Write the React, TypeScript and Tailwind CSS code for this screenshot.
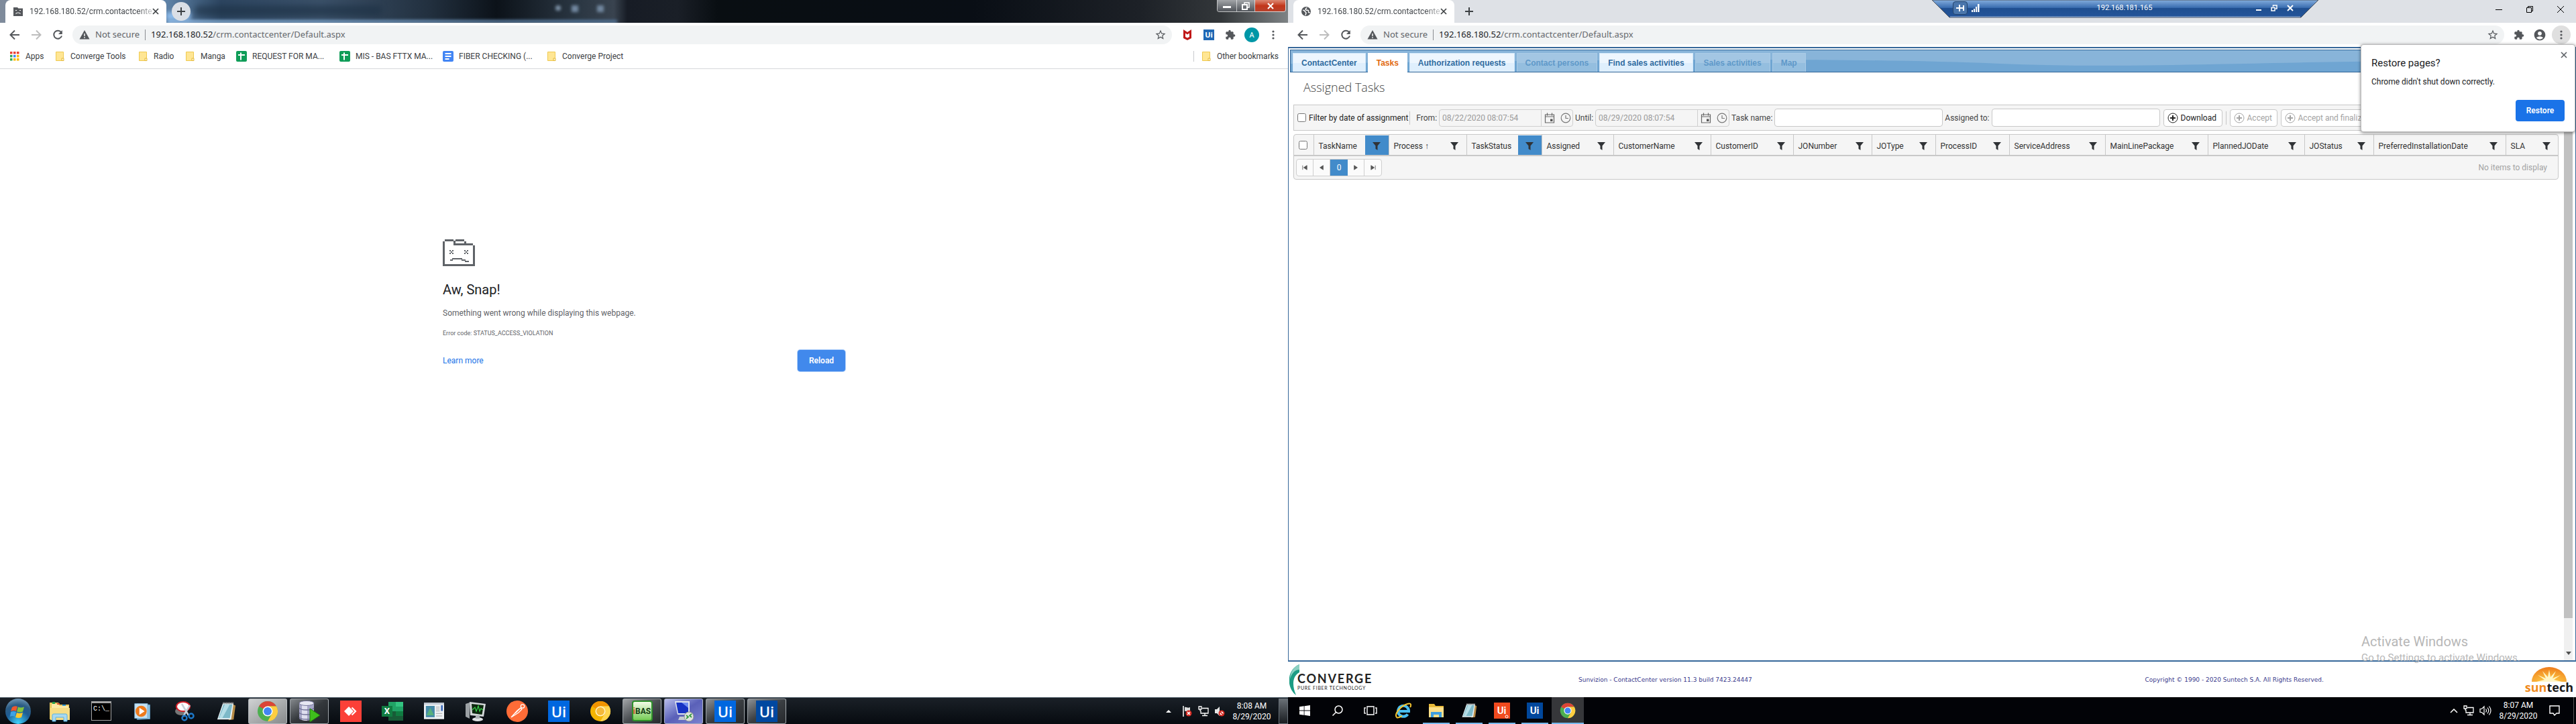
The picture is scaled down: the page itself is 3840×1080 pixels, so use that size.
import React from "react";
import { MdAccountCircle, MdExtension, MdStarBorder } from "react-icons/md";

type Kids = { children?: React.ReactNode };

/* ---------- small browser glyphs ---------- */

const ArrowGlyph = ({ forward = false }: { forward?: boolean }) => (
  <svg viewBox="0 0 16 16" className={forward ? "size-4 rotate-180 text-[#bdbdbd]" : "size-4 text-[#54575b]"} fill="none" stroke="currentColor" strokeWidth="2">
    <path d="M15 8H2M8 1.500L1.500 8 8 14.500" />
  </svg>
);

const ReloadGlyph = () => (
  <svg viewBox="0 0 16 16" className="size-4 text-[#54575b]" fill="none" stroke="currentColor" strokeWidth="2">
    <path d="M13.200 4.300A6 6 0 1 0 14 9.500" />
    <path d="M14.800 1v6H9z" fill="currentColor" stroke="none" />
  </svg>
);

const WarnGlyph = () => (
  <svg viewBox="0 0 16 16" className="size-4 shrink-0">
    <path d="M8 1l7.500 13.500H.5z" fill="#54575b" />
    <path d="M8 6v4M8 11.300v1.700" stroke="#f1f3f4" strokeWidth="1.500" />
  </svg>
);

const DotsGlyph = () => (
  <svg viewBox="0 0 4 16" className="h-4 w-1" fill="#54575b">
    <circle cx="2" cy="3" r="1.600" />
    <circle cx="2" cy="8" r="1.600" />
    <circle cx="2" cy="13" r="1.600" />
  </svg>
);

const CrossGlyph = ({ className }: { className: string }) => (
  <svg viewBox="0 0 10 10" className={className} fill="none" stroke="currentColor" strokeWidth="1.700">
    <path d="M1 1l8 8M9 1L1 9" />
  </svg>
);

const PlusGlyph = () => (
  <svg viewBox="0 0 14 14" className="size-3.5 text-[#3c4043]" stroke="currentColor" strokeWidth="2">
    <path d="M7 1v12M1 7h12" />
  </svg>
);

const FolderGlyph = () => (
  <svg viewBox="0 0 16 16" className="size-4 shrink-0">
    <path d="M2.500 1.500h11v13h-11z" fill="#ffe694" stroke="#efc94f" />
    <path d="M11 14.500v-3.500h3v3.500z" fill="#fff3c4" stroke="#e4b93c" />
  </svg>
);

const AppsGlyph = () => {
  const colors = ["#ea4335", "#ea4335", "#ea4335", "#34a853", "#4285f4", "#fbbc05", "#34a853", "#fbbc05", "#fbbc05"];
  return (
    <svg viewBox="0 0 16 16" className="size-4 shrink-0">
      {colors.map((c, i) => (
        <rect key={i} x={1 + (i % 3) * 5} y={1 + Math.floor(i / 3) * 5} width="3.500" height="3.500" fill={c} />
      ))}
    </svg>
  );
};

const SheetGlyph = () => (
  <svg viewBox="0 0 16 16" className="size-4 shrink-0">
    <rect width="16" height="16" rx="2" fill="#0f9d58" />
    <path d="M3 6h10M7 2.500v11" stroke="#fff" strokeWidth="2" />
  </svg>
);

const DocGlyph = () => (
  <svg viewBox="0 0 16 16" className="size-4 shrink-0">
    <rect width="16" height="16" rx="2" fill="#4285f4" />
    <path d="M3.500 4h9M3.500 8h9M3.500 12h6" stroke="#fff" strokeWidth="2" />
  </svg>
);

const SadTabGlyph = () => (
  <svg viewBox="0 0 14 14" className="size-3.5 shrink-0">
    <path d="M0 1h6l1.500 1.500H14V14H0z" fill="#54575b" />
    <path d="M3 5.500h2M9 5.500h2M3.500 10.500c1-2 6-2 7 0" stroke="#fff" fill="none" strokeWidth="1.200" />
  </svg>
);

const GlobeGlyph = () => (
  <svg viewBox="0 0 16 16" className="size-3.5 shrink-0">
    <circle cx="8" cy="8" r="8" fill="#54575b" />
    <path d="M2.500 6c2 0 3 .5 3.500 2s2 1 2 2.500-1 2-1 4M9 1.500c0 1.500-2 1.500-2 3s2 1.500 3.500 1.500 2 1 1.500 2.500 1 1.500 2.500 1.500" stroke="#fff" strokeWidth="1.700" fill="none" />
  </svg>
);

const DeadFolderArt = () => (
  <svg viewBox="0 0 48 40" className="h-10 w-12" fill="none" stroke="#5f6368" strokeWidth="3" shapeRendering="crispEdges">
    <path d="M1.500 3v35.500h45V9M3 1.500h13M19 1.500h13M17.500 1.500v6.500M16 7.500h29M33.500 3v5" />
    <path d="M10 17h2M14 17h2M12 19h2M10 21h2M14 21h2M32 17h2M36 17h2M34 19h2M32 21h2M36 21h2" strokeWidth="2" />
    <path d="M11 31h4M14 29h15M28 31h6M33 33h6" strokeWidth="2" />
  </svg>
);

/* ---------- browser chrome ---------- */

const Toolbar = ({ remote = false, children }: Kids & { remote?: boolean }) => (
  <div className="flex h-9 shrink-0 items-center bg-white pl-3.5 font-['Noto_Sans',sans-serif] text-[13px]">
    <button aria-label="Back" className="mr-4"><ArrowGlyph /></button>
    <button aria-label="Forward" className="mr-4"><ArrowGlyph forward /></button>
    <button aria-label="Reload" className="mr-3.5"><ReloadGlyph /></button>
    <div className="flex h-7 flex-1 items-center rounded-full bg-[#f1f3f4] pl-2.5 pr-2">
      <WarnGlyph />
      <span className="ml-2 text-[#5f6368]">Not secure</span>
      <span className="mx-2 h-4 w-px bg-[#8a8d91]" />
      <span className="flex-1 text-[#66696d]">
        <span className="text-[#202124]">192.168.180.52</span>/crm.contactcenter/Default.aspx
      </span>
      <button aria-label="Bookmark this page"><MdStarBorder className="size-[18px] text-[#54575b]" /></button>
    </div>
    {children}
    <span className={remote ? "w-2" : "w-3.5"} />
  </div>
);

const bookmarks = [
  { label: "Apps", icon: <AppsGlyph />, width: "w-[67px]" },
  { label: "Converge Tools", icon: <FolderGlyph />, width: "w-[124px]" },
  { label: "Radio", icon: <FolderGlyph />, width: "w-[70px]" },
  { label: "Manga", icon: <FolderGlyph />, width: "w-[77px]" },
  { label: "REQUEST FOR MA...", icon: <SheetGlyph />, width: "w-[154px]" },
  { label: "MIS - BAS FTTX MA...", icon: <SheetGlyph />, width: "w-[154px]" },
  { label: "FIBER CHECKING (...", icon: <DocGlyph />, width: "w-[154px]" },
  { label: "Converge Project", icon: <FolderGlyph />, width: "w-[130px]" },
];

const TabLabel = () => (
  <span className="ml-2.5 whitespace-nowrap text-[#45494d] [mask-image:linear-gradient(90deg,#000_88%,rgba(0,0,0,0.25))]">192.168.180.52/crm.contactcente</span>
);

const AeroStrip = () => (
  <div className="relative flex h-[34px] shrink-0 overflow-hidden bg-[#0a0f15]">
    <div className="absolute inset-0 bg-[linear-gradient(90deg,#7f8b9b_0px,#5d81a6_250px,#2c4560_330px,#3a5068_480px,#22303f_640px,#0c1219_740px,#2a3642_860px,#39434f_915px,#171c25_935px,#1a1f27_1010px,#090e12_1070px,#090e15_1450px,#1d2127_1700px,#33373a_1820px,#7e8385_1920px)]" />
    <div className="absolute bottom-0 left-[250px] h-1 w-[670px] bg-linear-to-r from-[#9ac4ee] to-[#56799e] blur-[2px]" />
    <div className="absolute bottom-1 left-[248px] h-3 w-[36px] bg-[#8fbdec] blur-[3px]" />
    <div className="absolute left-[290px] top-2 h-4 w-[280px] rounded-full bg-[#1c3045]/60 blur-[4px]" />
    <div className="absolute left-[828px] top-2 flex gap-4 blur-[2px]">
      <span className="size-2 rounded-full bg-[#7e93a8]" />
      <span className="size-2.5 bg-[#7288a0]" />
      <span className="ml-3 size-2.5 bg-[#7288a0]" />
    </div>
    <div className="relative ml-2 flex w-[240px] items-center rounded-t-lg bg-white pl-3 pr-3">
      <SadTabGlyph />
      <TabLabel />
      <button aria-label="Close tab" className="ml-auto text-[#3c4043]"><CrossGlyph className="size-2.5" /></button>
    </div>
    <button aria-label="New tab" className="relative ml-2 mt-[3px] flex size-7 items-center justify-center rounded-full bg-[#dadfe6]"><PlusGlyph /></button>
    <div className="relative ml-auto mr-[3px] flex h-[18px] w-[103px] overflow-hidden rounded-b border border-t-0 border-white/70 text-white">
      <button aria-label="Minimize" className="flex w-7 items-center justify-center bg-linear-to-b from-[#a2a5a8] to-[#50545a] pt-1"><span className="h-[3px] w-3 bg-white" /></button>
      <button aria-label="Restore" className="flex w-7 items-center justify-center border-x border-white/60 bg-linear-to-b from-[#a2a5a8] to-[#50545a]">
        <svg viewBox="0 0 12 12" className="size-3" fill="none" stroke="#fff" strokeWidth="1.500"><path d="M4 3V1h7v7H9" /><path d="M1 4h7v7H1z" strokeWidth="2" /></svg>
      </button>
      <button aria-label="Close" className="flex flex-1 items-center justify-center bg-linear-to-b from-[#dc8872] via-[#c2361a] to-[#b8422c]"><CrossGlyph className="size-2.5 stroke-2" /></button>
    </div>
  </div>
);

const CrashPage = () => (
  <main className="flex flex-1 flex-col items-center bg-white pt-[254px]">
    <div className="w-[600px]">
      <DeadFolderArt />
      <h1 className="mt-5 text-[20px] leading-[30px] text-[#202124]">Aw, Snap!</h1>
      <p className="mt-2.5 text-xs leading-5 text-[#5f6368]">Something went wrong while displaying this webpage.</p>
      <p className="mt-3 text-[9px] leading-4 text-[#5f6368]">Error code: STATUS_ACCESS_VIOLATION</p>
      <div className="mt-[17px] flex items-center justify-between">
        <a href="#learn" className="text-xs text-[#1a73e8]">Learn more</a>
        <button className="h-8 w-[71px] rounded bg-[#4189ec] text-xs font-semibold text-white ring-1 ring-[#b5d3fb]">Reload</button>
      </div>
    </div>
  </main>
);

const LocalBrowser = () => (
  <section className="flex min-h-0 flex-1 flex-col">
    <AeroStrip />
    <Toolbar>
      <div className="flex items-center gap-4 pl-[15px]">
        <svg viewBox="0 0 16 16" className="size-4"><path d="M2 0l6 4 6-4v13l-6 3-6-3z" fill="#c01818" /><path d="M5 5.500l3 2 3-2V11l-3 1.500L5 11z" fill="#fff" /></svg>
        <span className="flex size-4 items-center justify-center bg-[#1f68b5] text-[11px] font-bold text-white">Ui</span>
        <button aria-label="Extensions"><MdExtension className="size-4 text-[#54575b]" /></button>
        <button className="-mx-[3px] flex size-[22px] items-center justify-center rounded-full bg-[#0097a7] text-[11px] text-white">A</button>
        <button aria-label="Menu" className="flex w-4 justify-center"><DotsGlyph /></button>
      </div>
    </Toolbar>
    <nav aria-label="Bookmarks" className="flex h-[33px] shrink-0 items-center border-b border-[#d5d7da] bg-white pb-1 pl-3.5 text-[#3c4043]">
      {bookmarks.map((b) => (
        <a key={b.label} href="#bookmark" className={`flex shrink-0 items-center gap-2 whitespace-nowrap ${b.width}`}>
          {b.icon}
          {b.label}
        </a>
      ))}
      <a href="#other" className="ml-auto mr-3.5 flex items-center gap-2 whitespace-nowrap border-l border-[#c8cacd] pl-2.5">
        <FolderGlyph />
        Other bookmarks
      </a>
    </nav>
    <CrashPage />
  </section>
);

/* ---------- remote application ---------- */

const appTabs = [
  { label: "ContactCenter", state: "on" },
  { label: "Tasks", state: "current" },
  { label: "Authorization requests", state: "on" },
  { label: "Contact persons", state: "off" },
  { label: "Find sales activities", state: "on" },
  { label: "Sales activities", state: "off" },
  { label: "Map", state: "off" },
];

const tabLook: Record<string, string> = {
  on: "h-7 bg-linear-to-b from-[#eef6fe] from-50% to-[#dfeffd] to-50% text-[#2f6ba0] border-[#d3e8fa]",
  current: "h-[29px] -mb-px pb-px bg-white text-[#e26a10] border-white",
  off: "h-7 bg-linear-to-b from-[#a3c6e3] from-50% to-[#94bedf] to-50% text-[#5f99c9] border-[#aacbe6]",
};

const FunnelGlyph = () => (
  <svg viewBox="0 0 14 14" className="size-3.5" fill="#303336"><path d="M1 1h12L8.500 6.500V13l-3-2V6.500z" /></svg>
);

const CalendarGlyph = () => (
  <svg viewBox="0 0 16 16" className="size-4" fill="none" stroke="#666" strokeWidth="1.200">
    <path d="M1.500 3h13v12h-13zM1.500 6h13M4.500 .5v4M11.500 .5v4" /><path d="M9 9.500h3.500V13H9z" fill="#555" stroke="none" />
  </svg>
);

const ClockGlyph = () => (
  <svg viewBox="0 0 16 16" className="size-4" fill="none" stroke="#777" strokeWidth="1.200">
    <circle cx="8" cy="8" r="6.800" /><path d="M8 4v4.500h4" />
  </svg>
);

const CirclePlus = () => (
  <svg viewBox="0 0 16 16" className="size-4" fill="none" stroke="currentColor"><circle cx="8" cy="8" r="7" /><path d="M8 4v8M4 8h8" strokeWidth="2" /></svg>
);

const DateField = ({ label, value, id }: { label: string; value: string; id: string }) => (
  <>
    <label htmlFor={id}>{label}</label>
    <div className="flex h-[26px] w-[200px] shrink-0 items-center rounded border border-[#cfcfcf] bg-[#f5f5f5]">
      <input id={id} disabled defaultValue={value} className="h-full w-[152px] border-r border-[#cfcfcf] pl-1 text-[#9a9a9a]" />
      <button type="button" aria-label={`${label} calendar`} className="ml-1"><CalendarGlyph /></button>
      <button type="button" aria-label={`${label} time`} className="ml-2"><ClockGlyph /></button>
    </div>
  </>
);

const columns: { name: string; width: string; active?: boolean; arrow?: boolean }[] = [
  { name: "TaskName", width: "w-[112px]", active: true },
  { name: "Process", width: "w-[116px]", arrow: true },
  { name: "TaskStatus", width: "w-[112px]", active: true },
  { name: "Assigned", width: "w-[107px]" },
  { name: "CustomerName", width: "w-[145px]" },
  { name: "CustomerID", width: "w-[123px]" },
  { name: "JONumber", width: "w-[117px]" },
  { name: "JOType", width: "w-[95px]" },
  { name: "ProcessID", width: "w-[110px]" },
  { name: "ServiceAddress", width: "w-[143px]" },
  { name: "MainLinePackage", width: "w-[153px]" },
  { name: "PlannedJODate", width: "w-[144px]" },
  { name: "JOStatus", width: "w-[103px]" },
  { name: "PreferredInstallationDate", width: "w-[197px]" },
  { name: "SLA", width: "w-[78px]" },
];

const TaskGrid = () => (
  <div className="mt-[5px] rounded border border-[#c8c8c8] bg-[#f5f5f5] text-[#333]">
    <table className="w-full table-fixed border-collapse">
      <thead>
        <tr className="h-[31px] border-b-2 border-[#c8c8c8]">
          <th className="w-[29px] p-0 pl-[7px] pt-1 text-left"><input type="checkbox" aria-label="Select all" className="size-[13px]" /></th>
          {columns.map((c) => (
            <th key={c.name} className={`border-l border-[#c8c8c8] p-0 font-normal ${c.width}`}>
              <div className="flex h-[29px] items-center justify-between pl-[7px]">
                <span className="whitespace-nowrap pt-1">{c.name}{c.arrow ? " ↑" : ""}</span>
                <button aria-label={`Filter ${c.name}`} className={c.active ? "flex h-full w-[35px] items-center justify-center bg-[#428bca] pt-1" : "flex h-full w-[35px] items-center justify-center pt-1"}>
                  <FunnelGlyph />
                </button>
              </div>
            </th>
          ))}
        </tr>
      </thead>
    </table>
    <div className="flex h-[34px] items-center justify-between pl-[3px] pr-4">
      <div className="flex h-[26px] overflow-hidden rounded border border-[#cfcfcf] bg-[#fbfbfb]">
        {["M1 1v8M9 1v8L3 5z", "M8 1v8L2 5z", "", "M2 1v8l6-4z", "M1 1v8l6-4zM9 1v8"].map((d, i) =>
          d ? (
            <button key={i} aria-label={["First page", "Previous page", "", "Next page", "Last page"][i]} className="flex w-[25px] items-center justify-center border-r border-[#cfcfcf] last:border-r-0">
              <svg viewBox="0 0 10 10" className="size-2" fill="#555" stroke="#555"><path d={d} /></svg>
            </button>
          ) : (
            <button key={i} className="w-[26px] bg-[#428bca] text-white">0</button>
          )
        )}
      </div>
      <span className="text-[#a3a3a3]">No items to display</span>
    </div>
  </div>
);

const TasksPage = () => (
  <div className="relative flex min-h-0 flex-1 flex-col border-2 border-l border-r border-[#36679a] border-t-[#36679a] bg-white pl-0.5 pr-0 pt-0.5">
    <nav aria-label="Sections" className="relative flex h-[34px] shrink-0 items-end border border-[#2f6496] bg-[#88b4d9] pl-[3px] font-['Liberation_Sans',sans-serif] font-bold">
      <svg viewBox="0 0 1900 32" preserveAspectRatio="none" className="absolute inset-0 h-full w-full">
        <path d="M0 20C500 14 800 10 1050 20S1500 10 1900 18V32H0z" fill="#6fa5d2" />
      </svg>
      {appTabs.map((t) => (
        <a key={t.label} href="#tab" className={`relative mr-[3px] flex items-center border-x border-t px-3 ${tabLook[t.state]}`}>{t.label}</a>
      ))}
    </nav>
    <div className="flex min-h-0 flex-1">
      <main className="min-w-0 flex-1 pl-[5px] pr-2">
        <h1 className="ml-[15px] pb-2.5 pt-1.5 font-['Open_Sans',sans-serif] text-[18px] font-light leading-8 text-[#444]">Assigned Tasks</h1>
        <form className="flex h-[39px] items-center gap-[3px] overflow-hidden whitespace-nowrap border border-[#c8c8c8] bg-[#f5f5f5] pl-1 text-[#444]">
          <label className="mr-1.5 flex h-5 shrink-0 items-center gap-1 border-r border-[#c8c8c8] pr-0.5 text-[#222]"><input type="checkbox" className="ml-px size-[13px] shrink-0" />Filter by date of assignment</label>
          <DateField id="from" label="From:" value="08/22/2020 08:07:54" />
          <DateField id="until" label="Until:" value="08/29/2020 08:07:54" />
          <label htmlFor="task">Task name:</label>
          <input id="task" className="h-[27px] w-[251px] shrink-0 rounded border border-[#c8c8c8] bg-white" />
          <label htmlFor="assigned">Assigned to:</label>
          <input id="assigned" className="h-[27px] w-[251px] shrink-0 rounded border border-[#c8c8c8] bg-white" />
          <button type="button" className="ml-0.5 flex h-[26px] w-[88px] shrink-0 items-center gap-1 rounded border border-[#c8c8c8] bg-white pl-[5px] text-[#222]"><CirclePlus />Download</button>
          <span className="mx-0.5 h-5 w-px shrink-0 bg-[#c8c8c8]" />
          <button type="button" disabled className="flex h-[26px] w-[71px] shrink-0 items-center gap-1 rounded border border-[#c8c8c8] bg-white pl-[5px] text-[#a3a3a3]"><CirclePlus />Accept</button>
          <button type="button" disabled className="ml-0.5 flex h-[26px] w-[140px] shrink-0 items-center gap-1 rounded border border-[#c8c8c8] bg-white pl-[5px] text-[#a3a3a3]"><CirclePlus />Accept and finalize</button>
        </form>
        <TaskGrid />
      </main>
      <div className="mr-[4px] flex w-[13px] flex-col items-center bg-[#f0f0f0]">
        <div className="h-[814px] w-full bg-[#c1c1c1]" />
        <svg viewBox="0 0 8 5" className="mb-2 mt-auto h-[5px] w-2"><path d="M0 0h8L4 5z" fill="#505050" /></svg>
      </div>
    </div>
    <div className="absolute -bottom-1.5 right-[84px] w-[235px] whitespace-nowrap text-[#b7b7b7]">
      <div className="text-[20px] leading-7">Activate Windows</div>
      <div className="text-[15px] leading-5">Go to Settings to activate Windows.</div>
    </div>
  </div>
);

const RdpBar = () => (
  <div className="absolute left-1/2 top-0 h-[27px] w-[576px] text-white">
    <svg viewBox="0 0 576 27" className="absolute inset-0 h-full w-full">
      <defs>
        <linearGradient id="rdp" x1="0" y1="0" x2="0" y2="1">
          <stop offset="0" stopColor="#83addd" /><stop offset=".44" stopColor="#3a6db0" /><stop offset=".46" stopColor="#1f4f90" /><stop offset="1" stopColor="#24549a" />
        </linearGradient>
      </defs>
      <path d="M0 0h576l-26 26H26z" fill="url(#rdp)" stroke="#4c535c" />
      <path d="M27 25h522" stroke="#9fb9da" />
    </svg>
    <div className="relative grid h-6 grid-cols-[1fr_auto_1fr] items-center pl-[31px] pr-[37px]">
      <div className="flex items-center">
        <button aria-label="Pin" className="flex h-5 w-[22px] items-center justify-center rounded border border-[#24446c] bg-[#4a76ac]">
          <svg viewBox="0 0 12 10" className="h-2.5 w-3" fill="none" stroke="#fff" strokeWidth="2"><path d="M0 5h5M5 0v10M5 5h6M11 1v8" /></svg>
        </button>
        <svg viewBox="0 0 12 12" className="ml-1.5 size-3" fill="#fff"><path d="M0 9h2v3H0zM3 7h2v5H3zM6 4h2v8H6zM9 0h2.500v12H9z" /></svg>
      </div>
      <span className="pl-1 text-[11px]">192.168.181.165</span>
      <div className="flex items-center justify-end gap-3.5">
        <button aria-label="Minimize session" className="mt-1.5 h-0.5 w-2 bg-white" />
        <button aria-label="Restore session"><svg viewBox="0 0 10 10" className="size-2.5" fill="none" stroke="#fff" strokeWidth="1.500"><path d="M3.500 3V1H9v5H7M1 4.500h5V9H1z" /></svg></button>
        <button aria-label="Close session"><CrossGlyph className="size-2.5 stroke-2" /></button>
      </div>
    </div>
  </div>
);

const RestoreDialog = () => (
  <div role="dialog" aria-labelledby="restore-title" className="absolute right-px top-[66px] flex h-[131px] w-[320px] flex-col rounded-sm border border-[#bbb] bg-white p-[15px] text-[#202124] shadow-[0_1px_5px_rgba(0,0,0,0.5)]">
    <button aria-label="Close" className="absolute right-[11px] top-[10px] text-[#5f6368]"><CrossGlyph className="size-2.5" /></button>
    <h2 id="restore-title" className="text-[15px] leading-6">Restore pages?</h2>
    <p className="mt-1.5 leading-5">Chrome didn't shut down correctly.</p>
    <button className="ml-auto mt-auto h-8 w-[73px] shrink-0 rounded bg-[#1a73e8] font-semibold text-white">Restore</button>
  </div>
);

const RemoteBrowser = () => (
  <section className="relative flex min-h-0 flex-1 flex-col">
    <div className="flex h-[34px] shrink-0 bg-[#dee1e6] pl-2">
      <div className="flex w-[240px] items-center rounded-t-lg bg-white px-3">
        <GlobeGlyph />
        <TabLabel />
        <button aria-label="Close tab" className="ml-auto text-[#3c4043]"><CrossGlyph className="size-2.5" /></button>
      </div>
      <button aria-label="New tab" className="ml-[15px]"><PlusGlyph /></button>
      <div className="ml-auto mr-[18px] flex h-7 items-center gap-9 text-black">
        <button aria-label="Minimize" className="h-px w-2.5 bg-black" />
        <button aria-label="Restore"><svg viewBox="0 0 10 10" className="size-2.5" fill="none" stroke="currentColor"><path d="M2.500 2.500v-2h7v7h-2M.5 2.500h7v7h-7z" /></svg></button>
        <button aria-label="Close"><svg viewBox="0 0 10 10" className="size-2.5" stroke="currentColor"><path d="M0 0l10 10M10 0L0 10" /></svg></button>
      </div>
    </div>
    <Toolbar remote>
      <div className="flex items-center gap-3.5 pl-3.5">
        <button aria-label="Extensions"><MdExtension className="size-4 text-[#54575b]" /></button>
        <button aria-label="Profile" className="-mx-px"><MdAccountCircle className="size-5 text-[#54575b]" /></button>
        <button aria-label="Menu" className="-ml-[5px] flex size-7 items-center justify-center rounded-full bg-[#dfdfdf]"><DotsGlyph /></button>
      </div>
    </Toolbar>
    <TasksPage />
    <footer className="flex h-[53px] shrink-0 items-center bg-white font-['DejaVu_Sans',sans-serif] text-[9px] text-[#3a3a8c]">
      <div className="flex w-[433px] items-center pl-[2px]">
        <svg viewBox="0 0 16 46" className="h-[46px] w-4"><path d="M15 0C-4 8-5 34 10 46 4 32 4 18 15 12z" fill="#1c9c84" /><path d="M15 0C5 4 1 14 1 22 4 12 9 8 15 8z" fill="#8bd0c2" /></svg>
        <div className="-ml-1 pt-2 font-['Lato',sans-serif] text-[#222]">
          <div className="text-[18px] font-bold leading-4 tracking-widest">CONVERGE</div>
          <div className="text-[7px] leading-3 tracking-widest">PURE FIBER TECHNOLOGY</div>
        </div>
      </div>
      <span>Sunvizion - ContactCenter version 11.3 build 7423.24447</span>
      <span className="ml-auto">Copyright © 1990 - 2020 Suntech S.A. All Rights Reserved.</span>
      <div className="ml-[300px] mr-1 flex flex-col items-center">
        <svg viewBox="0 0 52 22" className="h-[22px] w-[52px]">
          <defs><radialGradient id="sun" cx=".5" cy="1" r="1"><stop offset="0" stopColor="#ffd24a" /><stop offset="1" stopColor="#ee7a1a" /></radialGradient></defs>
          <path d="M0 22a26 22 0 0 1 52 0z" fill="url(#sun)" />
          <path d="M26 4l2 11 8-9-5 11 12-5-10 7 12 3H7l12-3L9 12l12 5-5-11 8 9z" fill="#fff6c8" />
        </svg>
        <div className="font-['Open_Sans',sans-serif] text-[18px] font-bold leading-4 text-[#1a1a1a]"><span className="text-[#f08a1d]">sun</span>tech</div>
      </div>
    </footer>
    <RdpBar />
    <RestoreDialog />
  </section>
);

/* ---------- taskbar icons ---------- */

const ChromeArt = ({ canary = false, className }: { canary?: boolean; className: string }) => (
  <svg viewBox="0 0 32 32" className={className}>
    <circle cx="16" cy="16" r="15" fill={canary ? "#f4b400" : "#4caf50"} />
    <path d="M16 16L3 8.500A15 15 0 0 1 29 8.500H16z" fill={canary ? "#f09300" : "#db4437"} />
    <path d="M16 8.500h13A15 15 0 0 1 16 31l6.500-11.500z" fill={canary ? "#ffd54f" : "#ffcd40"} />
    <circle cx="16" cy="16" r="7.500" fill={canary ? "#fff3c4" : "#fff"} />
    <circle cx="16" cy="16" r="6" fill={canary ? "#f4b93a" : "#4285f4"} />
  </svg>
);

const FolderArt = ({ className }: { className: string }) => (
  <svg viewBox="0 0 32 32" className={className}>
    <path d="M1 3h13l2 3h14v22H1z" fill="#e8c65c" />
    <path d="M4 5h9l3 3h13v18H4z" fill="#fbe9a6" />
    <path d="M2 11h29v18H2z" fill="#f6dd86" />
    <path d="M5 31v-9q0-2 2-2h18q2 0 2 2v9h-5v-6H10v6z" fill="#a9d8f0" stroke="#58b2e4" />
    <path d="M5 2h4v3H5z" fill="#24a04a" /><path d="M12 4h4v2h-4z" fill="#d84a2c" /><path d="M20 6h5v2h-5z" fill="#2f9ad8" />
  </svg>
);

const NotepadArt = ({ className }: { className: string }) => (
  <svg viewBox="0 0 32 32" className={className}>
    <path d="M27 5l4 2-3 22-8 1z" fill="#b58a45" /><path d="M11 3h17l-4 26H2z" fill="#e8f2f5" /><path d="M12 5h14l-4 22H4z" fill="#7db9c8" /><path d="M14 5h8L10 27H5z" fill="#b5dde6" />
    <path d="M11 3h17" stroke="#888" strokeWidth="3" strokeDasharray="1.500 1" />
  </svg>
);

const UiTile = ({ tone }: { tone: string }) => (
  <span className={`flex size-8 items-center justify-center font-['Open_Sans',sans-serif] text-[22px] font-semibold leading-none text-white ${tone}`}>Ui</span>
);

const localApps: { name: string; open?: string; art: React.ReactNode }[] = [
  { name: "File Explorer", art: <FolderArt className="size-8" /> },
  { name: "Command Prompt", art: <span className="flex h-[29px] w-[30px] items-start border border-t-[3px] border-[#a5a5a5] bg-black pl-0.5 pt-1 font-['Liberation_Mono',monospace] text-[10px] leading-none text-white">C:\_</span> },
  { name: "Media Player", art: <svg viewBox="0 0 32 32" className="size-7"><path d="M6 3l22 2v24L6 30z" fill="#8fc3e2" stroke="#5f9cc4" /><path d="M2 3h22v25H2z" fill="#c4e2f4" stroke="#79aacb" /><circle cx="13" cy="16" r="9.500" fill="#ee7a1c" /><path d="M10 10l9 6-9 6z" fill="#fff" /></svg> },
  { name: "Snipping Tool", art: <svg viewBox="0 0 32 32" className="size-8"><ellipse cx="11" cy="16" rx="9" ry="6" fill="#777" /><ellipse cx="14" cy="9" rx="10" ry="7" fill="#fff" stroke="#d5202a" strokeWidth="2" /><path d="M12 5l10 17M24 7L14 24" stroke="#c7ced6" strokeWidth="2.500" /><circle cx="16" cy="26" r="3.500" fill="none" stroke="#1d78c8" strokeWidth="2.500" /><circle cx="26" cy="23" r="3.500" fill="none" stroke="#1d78c8" strokeWidth="2.500" /></svg> },
  { name: "Notepad", art: <NotepadArt className="size-[30px]" /> },
  { name: "Chrome", open: "bg-linear-to-br from-[#d0d2d3] to-[#878a8c]", art: <ChromeArt className="size-8" /> },
  { name: "SQL Developer", open: "bg-linear-to-br from-[#85898d] via-[#34383c] to-[#202428]", art: <svg viewBox="0 0 32 32" className="size-8"><path d="M1 4v22c0 5 22 5 22 0V4z" fill="#a5a5c6" /><path d="M5 5v24c3 1 6 1 8 1V5z" fill="#dedeee" /><ellipse cx="12" cy="4" rx="11" ry="3.500" fill="#e6e6f2" stroke="#77779c" /><path d="M1 11c2 4 20 4 22 0M1 18c2 4 20 4 22 0M1 25c2 4 20 4 22 0" fill="none" stroke="#6d6d94" strokeWidth="1.500" /><path d="M17 12l15 10-15 10z" fill="#3fbf1c" stroke="#207a0c" /></svg> },
  { name: "AnyDesk", art: <span className="flex size-8 items-center justify-center bg-[#fb4038]"><svg viewBox="0 0 20 14" className="h-3.5 w-5"><path d="M7 0l7 7-7 7-7-7z" fill="#fff" /><path d="M11.500 1.500L17 7l-5.500 5.500" fill="none" stroke="#fff" strokeWidth="2.200" /></svg></span> },
  { name: "Excel", art: <span className="relative flex size-8 items-center"><svg viewBox="0 0 32 32" className="absolute inset-0"><path d="M10 2h11v14H10z" fill="#21a366" /><path d="M21 2h11v7H21z" fill="#33c481" /><path d="M21 9h11v7H21z" fill="#21a366" /><path d="M10 16h11v14H10z" fill="#185c37" /><path d="M21 16h11v7H21z" fill="#107c41" /><path d="M21 23h11v7H21z" fill="#185c37" /></svg><span className="relative flex size-4 items-center justify-center bg-[#107c41] text-[13px] font-bold text-white">X</span></span> },
  { name: "System Viewer", art: <svg viewBox="0 0 32 26" className="h-[25px] w-[30px]"><path d="M0 0h32v26H0z" fill="#eef1f4" /><path d="M0 0h32v3H0z" fill="#c4ccd6" /><path d="M3 5h14v18H3z" fill="#468aa8" /><path d="M4 20l6-12 6 12z" fill="#59b07c" /><path d="M19 7h6M19 10h6M19 13h6M19 17h10M19 21h10" stroke="#a0a0a0" /><path d="M27 4h3v9h-3z" fill="#3c6ab8" /></svg> },
  { name: "Performance Monitor", art: <svg viewBox="0 0 32 32" className="size-8"><path d="M1 5l6-2v24l-6-3z" fill="#9ba0a4" /><path d="M7 2l24 3-3 19-20-2z" fill="#d4d8da" /><path d="M10 5l18 2-2.500 14L11 19z" fill="#0d280f" /><path d="M11 14l4-4 2 6 3-8 2 8 2-4 3 2" stroke="#39d24a" fill="none" strokeWidth="1.200" /><ellipse cx="19" cy="28" rx="8" ry="3" fill="#dfe2e4" /><path d="M16 22h6v5h-6z" fill="#aeb3b7" /></svg> },
  { name: "Postman", art: <svg viewBox="0 0 32 32" className="size-8"><circle cx="16" cy="16" r="16" fill="#ff6c37" /><path d="M7 25l9-10 5-4 2 2-5 5z" fill="none" stroke="#fff" strokeWidth="1.300" /><circle cx="24" cy="8.500" r="2.700" fill="none" stroke="#fff" strokeWidth="1.300" /><path d="M13 19l7-7" stroke="#fff" strokeWidth="1.500" /></svg> },
  { name: "UiPath Studio", art: <UiTile tone="bg-[#0067df]" /> },
  { name: "Chrome Canary", art: <ChromeArt canary className="size-8" /> },
  { name: "iBAS", open: "bg-linear-to-br from-[#a3a6a9] via-[#4a4e52] to-[#26292d]", art: <span className="flex h-[31px] w-[31px] items-center justify-center rounded border-2 border-[#2d8f2b] bg-linear-to-b from-[#f2fbe6] to-[#74cc52] text-xs font-bold text-[#143c12]"><span className="text-[#d4502a]">i</span>BAS</span> },
  { name: "Remote Desktop", open: "bg-linear-to-br from-[#b9bdea] via-[#5a60b8] to-[#7c82cf]", art: <svg viewBox="0 0 32 32" className="size-8"><path d="M3 1h22v20H7z" fill="#dfe4ee" /><path d="M5 3h18v16H8z" fill="#1732c4" /><path d="M13 3h10v8z" fill="#6f8cf0" /><path d="M10 24h12l3 5H8z" fill="#c5cad2" /><circle cx="24" cy="24" r="7" fill="#dfe3df" stroke="#8d948d" /><path d="M20 22l3 2.500-3 2.500M28 20l-3 2.500 3 2.500" fill="none" stroke="#2f9a38" strokeWidth="1.700" /></svg> },
  { name: "UiPath Assistant", open: "bg-linear-to-br from-[#8d9195] via-[#3a3e42] to-[#26292d]", art: <UiTile tone="bg-[#0067df]" /> },
  { name: "UiPath Robot", open: "bg-linear-to-br from-[#8d9195] via-[#3a3e42] to-[#26292d]", art: <UiTile tone="bg-[#0048a0]" /> },
];

const Clock = ({ time }: { time: string }) => (
  <div className="w-16 text-center text-xs leading-4 text-white">
    <div>{time}</div>
    <div>8/29/2020</div>
  </div>
);

const NetGlyph = () => (
  <svg viewBox="0 0 16 16" className="size-4" fill="none" stroke="#fff" strokeWidth="1.300"><path d="M6 3.500h9v7.500H4V7M10 11v3M6 14.500h8M1 1h4v4H1zM3 5v2h1" /></svg>
);

const LocalTaskbar = () => (
  <footer className="flex h-10 shrink-0 items-center border-t border-[#56646f] bg-linear-to-b from-[#1a2027] to-[#070b10] pl-2">
    <button aria-label="Start" className="mr-3.5 flex size-[38px] items-center justify-center rounded-full bg-[radial-gradient(circle_at_50%_95%,#3fd2fb,#1d5c94_45%,#2c5c84_65%,#8fb3cc)]">
      <svg viewBox="0 0 24 24" className="size-6"><path d="M3 6q4-3 8-1l-2 7q-3-2-8 0z" fill="#f0582c" /><path d="M12 5.500q4 2 9 0l-2 7q-4 2-9 0z" fill="#84c43c" /><path d="M1 13q4-2 8 0l-2 7q-3-2-7 0z" fill="#3ea2e4" /><path d="M10 14q4 2 9 0l-2 7q-4 2-9 0z" fill="#fcc82c" /></svg>
    </button>
    <div className="flex items-center gap-1">
      {localApps.map((a) => (
        <button key={a.name} aria-label={a.name} className={`flex h-[38px] w-[58px] items-center justify-center rounded-[3px] ${a.open ? "border border-[#b4babf]/80 " + a.open : ""}`}>{a.art}</button>
      ))}
    </div>
    <div className="ml-auto flex items-center gap-2">
      <svg viewBox="0 0 8 4" className="mr-2 h-1 w-2"><path d="M0 4l4-4 4 4z" fill="#fff" /></svg>
      <svg viewBox="0 0 16 16" className="size-4"><path d="M2 0v16" stroke="#fff" strokeWidth="1.500" /><path d="M4 2c3-1 4 2 8 0v6c-4 2-5-1-8 0z" fill="#ddd" /><circle cx="10" cy="11" r="4.500" fill="#d4261e" /><path d="M8 9l4 4M12 9l-4 4" stroke="#fff" strokeWidth="1.500" /></svg>
      <NetGlyph />
      <svg viewBox="0 0 16 16" className="size-4"><path d="M1 5h3l4-4v14l-4-4H1z" fill="#e4e4e4" /><circle cx="11" cy="11" r="4.500" fill="#d4261e" /><circle cx="11" cy="11" r="2.500" fill="#fff" /><path d="M8 8l6 6" stroke="#d4261e" strokeWidth="1.700" /></svg>
      <Clock time="8:08 AM" />
      <button aria-label="Show desktop" className="h-[38px] w-[14px] border border-[#6c747c] bg-linear-to-b from-[#6a7076] to-[#1a1e22]" />
    </div>
  </footer>
);

const remoteApps: { name: string; state: string; art: React.ReactNode }[] = [
  { name: "Start", state: "idle", art: <svg viewBox="0 0 16 16" className="size-4" fill="#fff"><path d="M0 2.300L6.700 1.300V7.600H0zM7.500 1.200L16 0V7.600H7.500zM0 8.400H6.700V14.700L0 13.700zM7.500 8.400H16V16L7.500 14.800z" /></svg> },
  { name: "Search", state: "idle", art: <svg viewBox="0 0 16 16" className="size-4" fill="none" stroke="#fff" strokeWidth="1.500"><circle cx="9.500" cy="6.500" r="5.500" /><path d="M5.500 10.500L.5 15.500" /></svg> },
  { name: "Task View", state: "idle", art: <svg viewBox="0 0 20 14" className="h-3.5 w-5" fill="none" stroke="#fff" strokeWidth="1.400"><path d="M5 1h10v12H5zM3 3H1v8h2M17 3h2v8h-2" /></svg> },
  { name: "Internet Explorer", state: "idle", art: <svg viewBox="0 0 24 24" className="size-6" fill="none"><path d="M4.500 13H20a8 8 0 1 0-1.500 4.500" stroke="#48bdf0" strokeWidth="4" /><path d="M2 22C-2 17 8 5 18 2c6-2 6 2 4 5M2 22c2 2 6-1 8-2" stroke="#f4c430" strokeWidth="2" /></svg> },
  { name: "File Explorer", state: "open", art: <svg viewBox="0 0 24 22" className="h-[22px] w-6"><path d="M1 1h8l2 3h12v17H1z" fill="#e8b93a" /><path d="M1 6h22v15H1z" fill="#fde08a" /><path d="M4 21v-8h16v8h-4v-4H8v4z" fill="#3f9fe0" /></svg> },
  { name: "Notepad", state: "open", art: <NotepadArt className="size-6" /> },
  { name: "UiPath Orchestrator", state: "open", art: <span className="relative flex size-6 items-center justify-center bg-[#f04a1e] text-[15px] font-semibold leading-none text-white">Ui<svg viewBox="0 0 6 6" className="absolute bottom-0 right-0.5 size-1.5" fill="none" stroke="#fff"><circle cx="3" cy="3" r="2" /></svg></span> },
  { name: "UiPath Robot", state: "open", art: <span className="flex size-6 items-center justify-center bg-[#00479c] text-[15px] font-semibold leading-none text-white">Ui</span> },
  { name: "Chrome", state: "active", art: <ChromeArt className="size-6" /> },
];

const remoteLook: Record<string, string> = {
  idle: "border-transparent",
  open: "border-[#76b9ed]",
  active: "border-[#76b9ed] bg-[#36373a]",
};

const RemoteTaskbar = () => (
  <footer className="flex h-10 shrink-0 items-center bg-[#020307]">
    {remoteApps.map((a) => (
      <button key={a.name} aria-label={a.name} className="flex h-full w-[49px] justify-center">
        <span className={`flex h-full items-center justify-center border-b-2 pt-0.5 ${a.state === "active" ? "w-12" : "w-10"} ${remoteLook[a.state]}`}>{a.art}</span>
      </button>
    ))}
    <div className="ml-auto flex h-full items-center gap-2">
      <svg viewBox="0 0 12 7" className="h-[7px] w-3" fill="none" stroke="#fff" strokeWidth="1.500"><path d="M1 6l5-5 5 5" /></svg>
      <NetGlyph />
      <svg viewBox="0 0 18 16" className="h-4 w-[18px]" fill="none" stroke="#fff" strokeWidth="1.200"><path d="M1 5.500h2.500L7 2v12l-3.500-3.500H1zM9.500 5.500q2 2.500 0 5M12 3.500q3.500 4.500 0 9M14.500 1.500q5 6.500 0 13" /></svg>
      <Clock time="8:07 AM" />
      <svg viewBox="0 0 16 16" className="ml-1.5 size-4" fill="none" stroke="#fff" strokeWidth="1.400"><path d="M1 1h14v11h-4l-3 3-2-3H1z" /></svg>
      <span className="ml-3 mr-[3px] h-full w-px bg-[#555]" />
    </div>
  </footer>
);

export default function App() {
  return (
    <div className="grid h-screen grid-cols-2 overflow-hidden font-['Roboto','Noto_Sans',sans-serif] text-xs">
      <div className="flex min-h-0 min-w-0 flex-col">
        <LocalBrowser />
        <LocalTaskbar />
      </div>
      <div className="flex min-h-0 min-w-0 flex-col">
        <RemoteBrowser />
        <RemoteTaskbar />
      </div>
    </div>
  );
}
